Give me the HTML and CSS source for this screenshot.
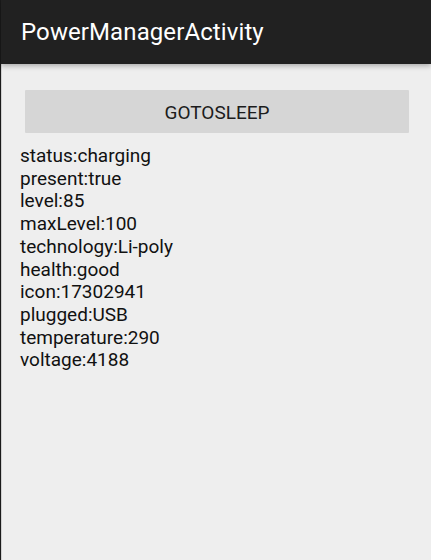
FILE: index.html
```html
<!DOCTYPE html>
<html>
<head>
<meta charset="utf-8">
<link rel="stylesheet" href="styles.css">
</head>
<body>
<div class="screen">
  <header class="actionbar">
    <span class="title">PowerManagerActivity</span>
  </header>
  <main class="content">
    <button class="btn">GOTOSLEEP</button>
    <div class="info">
      <div>status:charging</div>
      <div>present:true</div>
      <div>level:85</div>
      <div>maxLevel:100</div>
      <div>technology:Li-poly</div>
      <div>health:good</div>
      <div>icon:17302941</div>
      <div>plugged:USB</div>
      <div>temperature:290</div>
      <div>voltage:4188</div>
    </div>
  </main>
</div>
</body>
</html>
```
FILE: styles.css
```css
html, body {
  margin: 0;
  padding: 0;
  height: 100%;
  background: #eeeeee;
  font-family: Roboto, "Noto Sans", sans-serif;
}
.screen {
  height: 560px;
  border-left: 1px solid #1a1a1a;
  box-shadow: inset 1px 0 0 #d0d0d0;
  display: flex;
  flex-direction: column;
  background: #eeeeee;
}
.actionbar {
  height: 64px;
  background: #212121;
  display: flex;
  align-items: center;
  padding-left: 20px;
  padding-bottom: 1px;
  box-sizing: border-box;
  position: relative;
  box-shadow: 0 2px 5px rgba(0,0,0,0.28);
}
.title {
  color: #ffffff;
  font-size: 24px;
  letter-spacing: 0.1px;
}
.content {
  padding-top: 26px;
  display: flex;
  flex-direction: column;
}
.btn {
  margin: 0 22px 0 24px;
  height: 43px;
  background: #d6d6d6;
  border: none;
  border-radius: 1px;
  font-family: Roboto, "Noto Sans", sans-serif;
  font-size: 19px;
  color: #1c1c1c;
  padding: 0;
  padding-top: 1px;
}
.info {
  margin-top: 12px;
  padding-left: 19px;
  font-size: 19px;
  line-height: 22.7px;
  color: #111111;
}
```
